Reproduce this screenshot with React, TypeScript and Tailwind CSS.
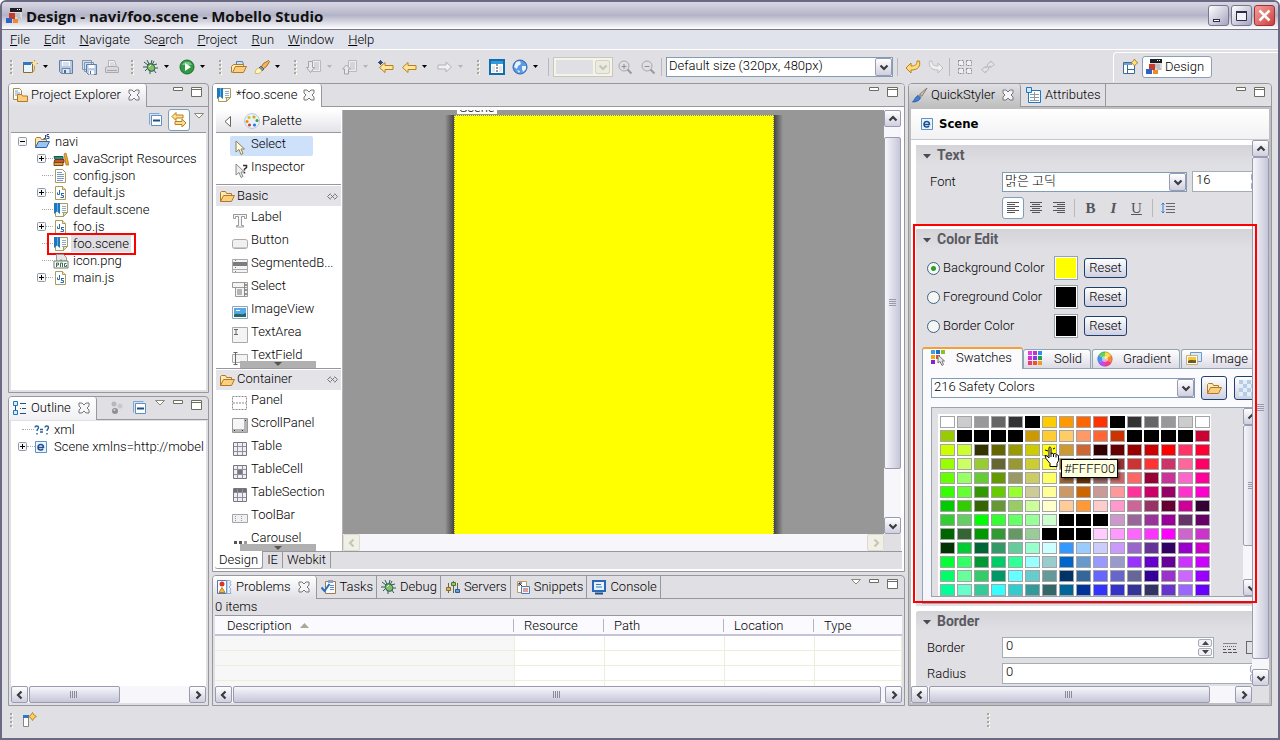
import React from "react";

type Kids = { children?: React.ReactNode };

/* ---------- icons ---------- */

function Svg({ children, w = 16, h = 16 }: Kids & { w?: number; h?: number }) {
  return (
    <svg width={w} height={h} viewBox={`0 0 ${w} ${h}`} fill="none" className="shrink-0" aria-hidden="true">
      {children}
    </svg>
  );
}

const AppIcon = () => (
  <Svg>
    <path d="M4 0h12v11H4z" fill="#d9d9de" />
    <path d="M4 0h12v4H4z" fill="#1d1d22" />
    <path d="M11 1h1v1h-1zM13 1h1v1h-1z" fill="#fff" />
    <path d="M9 6h5M9 8h5M11 10h4" stroke="#a5a5ad" />
    <path d="M3 5h6v6H3z" fill="#c6392c" />
    <path d="M0 10h6v5H0z" fill="#2e63c4" />
    <path d="M7 11h5v4H7z" fill="#f08a24" />
  </Svg>
);
const NewIcon = () => (
  <Svg>
    <path d="M1.500 3.500h9v10h-9z" fill="#e8f7fd" stroke="#8a6a2a" />
    <path d="M1 3h8v3H1z" fill="#2e78c4" />
    <path d="M12.500 1v8M9 4.500h7M12.500 9c0 3-1 4-3 4.500" stroke="#c8962c" />
    <path d="M12.500 2l1 1.500 1.500 1-1.500 1-1 1.500-1-1.500-1.500-1 1.500-1z" fill="#ffe88a" />
  </Svg>
);
const SaveIcon = () => (
  <Svg>
    <path d="M1.500 1.500h13v13h-11l-2-2z" fill="#b9cbe4" stroke="#5f7fa8" />
    <path d="M4 2h8v5H4z" fill="#fff" />
    <path d="M5 4h6M5 6h6" stroke="#b5c0d0" />
    <path d="M4 9.500h8v5H4z" fill="#dfe7f2" stroke="#6c87ab" />
    <path d="M6 11h2v3H6z" fill="#4c6c98" />
  </Svg>
);
const SaveAllIcon = () => (
  <Svg>
    <path d="M1.500 1.500h9v9h-9zM3.500 3.500h9v9h-9z" fill="#d3deed" stroke="#7c96b8" />
    <path d="M5.500 5.500h10v10h-8l-2-2z" fill="#b9cbe4" stroke="#5f7fa8" />
    <path d="M7.500 6h6v3h-6zM8 11.500h5v4H8z" fill="#fff" />
    <path d="M9 12h1v3H9z" fill="#4c6c98" />
  </Svg>
);
const PrintIcon = () => (
  <Svg>
    <path d="M4.500 1.500h6l2 6h-8z" fill="#f3f3f3" stroke="#b5b5b8" />
    <path d="M6 4h4M6 6h5" stroke="#c4c4c6" />
    <path d="M1.500 8.500l2-1h9l2 1v5h-13z" fill="#d9d9dc" stroke="#aaaab0" />
    <path d="M3 11.500h10" stroke="#a5a5aa" />
  </Svg>
);
const BugIcon = () => (
  <Svg>
    <path d="M1 3l4 3M4 1l2 4M9 1l-1 4M14 5l-4 1M15 9h-4M13 14l-3-4M7 15l0-4M2 12l3-3M0 8h5M11 2l-2 4" stroke="#2c5a50" />
    <ellipse cx="8" cy="8.500" rx="4" ry="3.400" transform="rotate(40 8 8.500)" fill="#86bd68" stroke="#2a6152" />
    <path d="M6 8l2-2" stroke="#e2f2c4" />
  </Svg>
);
const RunIcon = () => (
  <Svg>
    <circle cx="8" cy="8" r="7" fill="#2f9a44" stroke="#1d6e2e" />
    <path d="M3 6a5.500 5.500 0 0 1 10 0z" fill="#7cc487" />
    <path d="M6 4l6 4-6 4z" fill="#fff" />
  </Svg>
);
const OpenFolder = () => (
  <Svg>
    <path d="M1.500 13.500v-9l1-1h4l1 2h5v2" fill="#fde9b4" stroke="#b07a2a" />
    <path d="M1.500 13.500l3-6h11l-3 6z" fill="#fbcf7e" stroke="#b07a2a" />
  </Svg>
);
const TaskFolder = () => (
  <Svg>
    <path d="M5.500 5.500v-3h6l1 3" fill="#cfe0f4" stroke="#5f7fa8" />
    <path d="M0.500 13.500v-6l2-2h10v2" fill="#fde9b4" stroke="#b07a2a" />
    <path d="M1.500 13.500l3-6h11l-3 6z" fill="#fbcf7e" stroke="#b07a2a" />
  </Svg>
);
const TorchIcon = () => (
  <Svg>
    <path d="M14.500 1.500l-5 3-2 3 2 2 3-2 3-5z" fill="#f5b65a" stroke="#a96a20" />
    <path d="M7 7l3 3-2 2-3-3z" fill="#8a8fa8" stroke="#5a5f78" />
    <path d="M5 9l3 3-3 2.500H1l1-4z" fill="#fff6c0" stroke="#d8bf62" />
  </Svg>
);
const StepIcon = ({ up }: { up?: boolean }) => (
  <Svg>
    <path d="M6.500 1.500h8v11h-8z" fill="#eeeef0" stroke="#b9b9bc" />
    <path d="M8 4h5M8 6h5M8 8h5M8 10h5" stroke="#bdbdc0" />
    {up ? (
      <path d="M4.500 6l4 4h-2v5h-4v-5h-2z" fill="#e9e9ec" stroke="#a4a4a8" />
    ) : (
      <path d="M2.500 2.500h4v6h2l-4 5-4-5h2z" fill="#e9e9ec" stroke="#a4a4a8" />
    )}
  </Svg>
);
const ArrowLeft = ({ star }: { star?: boolean }) => (
  <Svg>
    <path d="M1.500 8.500l5.500-5v3h8v4h-8v3z" fill="#ffe69a" stroke="#b97f1c" strokeLinejoin="round" />
    {star && <path d="M2.500 1v5M0 3.500h5M1 2l3 3M4 2L1 5" stroke="#2d4f86" />}
  </Svg>
);
const ArrowRight = () => (
  <Svg>
    <path d="M14.500 8l-5.500-5v3h-8v4h8v3z" fill="#f0f0f0" stroke="#b4b4b8" strokeLinejoin="round" />
  </Svg>
);
const LayoutIcon = () => (
  <Svg>
    <path d="M1 1h14v14H1z" fill="#fff" stroke="#0f6fae" strokeWidth="2" />
    <path d="M2 2h12v3H2z" fill="#2f9bdc" />
    <path d="M8 5v9" stroke="#333" strokeDasharray="2 1" />
    <path d="M3 7h3v6H3zM10 7h3v6h-3z" fill="#e4e8ec" />
  </Svg>
);
const GlobeIcon = () => (
  <Svg>
    <circle cx="8" cy="8" r="7" fill="#5a9be4" stroke="#2c62b4" />
    <path d="M4 3l4-1 1 3-3 2-1 3-3-2zM10 7l4 0 0 3-3 3-1-3zM5 11l3 1-1 2z" fill="#eaf3fd" />
  </Svg>
);
const ZoomIcon = ({ plus }: { plus?: boolean }) => (
  <Svg>
    <circle cx="7" cy="7" r="5" stroke="#a8a8ac" />
    <path d={plus ? "M4.500 7.500h5M7 5v5" : "M4.500 7.500h5"} stroke="#8e8e94" />
    <path d="M10.500 10.500l4 4" stroke="#9a9aa0" strokeWidth="2" />
  </Svg>
);
const UndoIcon = ({ redo }: { redo?: boolean }) => (
  <Svg>
    <g transform={redo ? "translate(16 0) scale(-1 1)" : undefined}>
      <path
        d="M1 9l5-5v3c4 0 6-1 6-5h2.500c1 5-1 9-8.500 9v3z"
        fill={redo ? "#efefef" : "#ffdc78"}
        stroke={redo ? "#bcbcc0" : "#b97f1c"}
        strokeLinejoin="round"
      />
    </g>
  </Svg>
);
const GridDotsIcon = () => (
  <Svg>
    <path d="M1.500 1.500h5v5h-5zM9.500 1.500h5v5h-5zM1.500 9.500h5v5h-5zM9.500 9.500h5v5h-5z" stroke="#8f8f94" strokeDasharray="2 1" fill="#f0f0f2" />
  </Svg>
);
const SyncIcon = () => (
  <Svg>
    <path d="M7.500 8c-.5-3 1-4.500 3-4.500V2l4 3.500-4 3V7c-1.500 0-1.500 1-1.500 2zM8.500 8c.5 3-1 4.500-3 4.500V14l-4-3.500 4-3V9C7 9 7 8 7 7z" fill="#e4e4e4" stroke="#b9b9bc" />
  </Svg>
);
const PerspectiveIcon = () => (
  <Svg>
    <path d="M1.500 3.500h11v11h-11z" fill="#fff" stroke="#3b6a94" />
    <path d="M2 4h8v2H2z" fill="#6ba2d8" />
    <path d="M5.500 6v8M5.500 10.500h7" stroke="#3b6a94" />
    <path d="M12.500 0l1.500 2.500 2 1-2 1.500-1.500 2-1.500-2-2-1.500 2-1z" fill="#ffe27a" stroke="#a8792a" strokeWidth=".8" />
  </Svg>
);
const ExplorerIcon = () => (
  <Svg>
    <path d="M1.500 1.500h6l2 2v9h-8z" fill="#fff" stroke="#a08b50" />
    <path d="M3 4h3M3 6h5M3 8h4" stroke="#7aa0d0" />
    <path d="M5.500 14.500v-7h4l1 1.500h5v5.500z" fill="#fbcf7e" stroke="#b07a2a" />
  </Svg>
);
const SceneFile = () => (
  <Svg>
    <path d="M2.500 1.500h12v9l-4 4h-8z" fill="#fbfaf3" stroke="#a99a62" />
    <path d="M9 4.500h4M9 6.500h4M9 8.500h4M9 10.500h2" stroke="#86aedb" />
    <path d="M10.500 14.500v-4h4z" fill="#e9dfb4" stroke="#a99a62" />
    <path d="M1 1h6v11l-3-2.500L1 12z" fill="#1f78ba" />
    <path d="M4 1h1v9H4z" fill="#5fb0e4" />
  </Svg>
);
const JsFile = () => (
  <Svg>
    <path d="M2.500 1.500h7l3 3v10h-10z" fill="#fff" stroke="#a99a62" />
    <path d="M9.500 1.500v3h3" stroke="#a99a62" fill="#f2e6b5" />
    <path d="M6.500 5v4.500h-2v-2M8 8.500h3M8.500 8.500v2h2v2h-3" stroke="#2868ae" />
  </Svg>
);
const TextFile = () => (
  <Svg>
    <path d="M2.500 1.500h7l3 3v10h-10z" fill="#fff" stroke="#a99a62" />
    <path d="M4 4.500h5M4 6.500h7M4 8.500h7M4 10.500h7M4 12.500h6" stroke="#8099c4" />
  </Svg>
);
const PngFile = () => (
  <Svg>
    <path d="M3.500 1.500h7l3 3v10h-10z" fill="#e6e6e6" stroke="#9a9a9a" />
    <path d="M5 9l3-3 2 2 2-1v1z" fill="#7dae82" />
    <path d="M1 8h14v7H1z" fill="#fff" stroke="#777" />
    <path d="M3.500 14v-4h2v2h-2M7.500 14v-4h2v4M13.500 10.500h-2v3h2v-1.500" stroke="#35734d" />
  </Svg>
);
const LibIcon = () => (
  <Svg>
    <path d="M1 5.500h9v3H2z" fill="#2e8b83" stroke="#135a55" />
    <path d="M2 8.500h9v3H1z" fill="#c25a2c" stroke="#7c2f10" />
    <path d="M1 11.500h9v3H1z" fill="#e09a44" stroke="#7c4a10" />
    <path d="M11 3l2-1 3 12h-3z" fill="#f2a725" stroke="#a8681a" strokeWidth=".7" />
  </Svg>
);
const ProjectIcon = () => (
  <Svg>
    <path d="M1.500 13.500v-9l1-1h4l1 2h5v2" fill="#fde9b4" stroke="#b07a2a" />
    <path d="M1.500 13.500l3-6h11l-3 6z" fill="#9dc3ee" stroke="#2d62ac" />
    <path d="M11.500 1v3.500h-2M15 .5h-2v2h2v2h-2.500" stroke="#1d4f95" />
  </Svg>
);
const OutlineIcon = () => (
  <Svg>
    <path d="M1.500 1.500h4v4h-4zM1.500 10.500h4v4h-4z" fill="#d7ebf8" stroke="#1f78ba" />
    <path d="M3.500 6v4M8 3.500h6M10 8.500h4M8 13.500h6M8 8.500h1" stroke="#24507e" />
  </Svg>
);
const DotsIcon = () => (
  <Svg>
    <circle cx="5" cy="4" r="2.500" fill="#b8b8bb" />
    <circle cx="11" cy="6" r="2.500" fill="#c9c9cc" />
    <circle cx="6" cy="11" r="3" fill="#8f8f92" />
    <circle cx="5.500" cy="10" r="1" fill="#d4d4d6" />
  </Svg>
);
const CollapseIcon = () => (
  <Svg>
    <path d="M1.500 12.500v-11h10" stroke="#7aa7d6" />
    <path d="M3.500 3.500h10v10h-10z" fill="#fff" stroke="#5d8fc6" />
    <path d="M5 8.500h7" stroke="#1d4f95" strokeWidth="2" />
  </Svg>
);
const LinkIcon = () => (
  <Svg>
    <path d="M1 4.500l4-4v2.500h7v3H5v2.500zM15 11l-4-4v2.500H4v3h7v2.500z" fill="#ffe08a" stroke="#b97f1c" strokeLinejoin="round" />
  </Svg>
);
const PaletteIcon = () => (
  <Svg>
    <circle cx="8" cy="8" r="7.500" fill="#e6f1fb" stroke="#b4cde6" />
    <circle cx="5" cy="4.500" r="1.500" fill="#f5b800" />
    <circle cx="10" cy="4" r="1.500" fill="#d9a400" />
    <circle cx="13" cy="7.500" r="1.500" fill="#3f9f2a" />
    <circle cx="3" cy="8.500" r="1.500" fill="#f58a00" />
    <circle cx="5.500" cy="12" r="1.500" fill="#d93a22" />
    <circle cx="10.500" cy="12" r="1.500" fill="#2a6fd6" />
  </Svg>
);
const CursorIcon = ({ help }: { help?: boolean }) => (
  <Svg>
    <path d="M4 1v11l3-2.500 2 5 2-1-2-4.500h3.500z" fill={help ? "#eee" : "#fff9e0"} stroke={help ? "#888" : "#8f7f55"} />
    {help && <path d="M11 2.500h3.500v2l-2 1.500v1.500M12.500 9v1.500" stroke="#333" strokeWidth="1.500" />}
  </Svg>
);
const QuickIcon = () => (
  <Svg>
    <path d="M15 1L8 7l2 2z" fill="#d8c7b0" stroke="#7a6a55" strokeWidth=".8" />
    <path d="M8 6.500l2.500 2.500-2 2L6 8.500z" fill="#9a9a9a" />
    <path d="M6 8.500l2.500 2.500c-1 2.500-4 4-8 4 2-1.500 2.500-5 5.500-6.500z" fill="#3f7fd4" stroke="#2456a0" strokeWidth=".8" />
  </Svg>
);
const AttrIcon = () => (
  <Svg>
    <path d="M2.500 3.500h12v12h-12z" fill="#fff" stroke="#1f78ba" />
    <path d="M4 7.500h9M4 10.500h9M4 13.500h9M8.500 5v9" stroke="#8b98a8" />
    <path d="M.5.500h5v5h-5z" fill="#cfe8f8" stroke="#1f78ba" />
  </Svg>
);
const ElementIcon = () => (
  <Svg w={12} h={12}>
    <path d="M.5.500h11v11H.5z" fill="#eef4fb" stroke="#5d94c8" />
    <path d="M3 6.500h5.500c0-4-5.500-4-5.500 0 0 3 4 3 5 1.500" stroke="#1d4f95" strokeWidth="1.500" />
  </Svg>
);
const XmlIcon = () => (
  <Svg w={16} h={12}>
    <path d="M1 3.500c0-2 3.500-2 3.500 0C4.500 5 3 5 3 7M3 9v1.500M6 5.500h3M6 8h3M11 3.500c0-2 3.500-2 3.500 0 0 1.500-1.500 1.500-1.500 3.500M13 9v1.500" stroke="#24609c" strokeWidth="1.400" />
  </Svg>
);
const ProblemsIcon = () => (
  <Svg>
    <path d="M1.500 1.500h9v13h-9z" fill="#fff" stroke="#4f7ab0" />
    <path d="M11 1.500h3l1 1-1 1.500 1 2-2 2 2 2-1 2 1 2.500h-4z" fill="#e8f1fb" stroke="#8fb2dc" />
    <circle cx="6" cy="5" r="2.500" fill="#d9342a" />
    <path d="M6 8.500l3 5H3z" fill="#f6b94a" stroke="#b97f1c" />
  </Svg>
);
const TasksIcon = () => (
  <Svg>
    <path d="M4.500 2.500h10v12h-10z" fill="#f7fbff" stroke="#a07a48" />
    <path d="M7 1h5v3H7z" fill="#8aa0c0" />
    <path d="M9 6.500h4M9 8.500h4M9 10.500h4" stroke="#5a88c0" />
    <path d="M.500 8.500l3 3.500 5-7" stroke="#2a6fb8" strokeWidth="2" />
  </Svg>
);
const ServersIcon = () => (
  <Svg>
    <path d="M3.500 4v10M8.500 2v12M12.500 4v10" stroke="#5a6a4a" />
    <path d="M1.500 8.500h4v3h-4z" fill="#e2b84a" stroke="#8a6a2a" />
    <path d="M6.500 3.500h4v3h-4z" fill="#9bc46a" stroke="#4a7a2a" />
    <path d="M10.500 10.500h4v3h-4z" fill="#6aa0dc" stroke="#2a5a9a" />
  </Svg>
);
const SnippetsIcon = () => (
  <Svg>
    <path d="M2.500 2.500h9v11h-9z" fill="#fff" stroke="#c09a5a" />
    <path d="M4 4l4 4M4 4h3M4 4v3" stroke="#222" />
    <path d="M6.500 7.500h8v7h-8z" fill="#eef6ff" stroke="#4a80b8" />
    <path d="M8 10h5M8 12h5" stroke="#c64a3a" />
  </Svg>
);
const ConsoleIcon = () => (
  <Svg>
    <path d="M2 2h12v10H2z" fill="#e8f2fc" stroke="#2a6ab4" strokeWidth="2" />
    <path d="M5 5.500h5M5 8h6" stroke="#3a78c0" />
    <path d="M4 14.500h8" stroke="#1f4f8a" strokeWidth="2" />
  </Svg>
);
const CloseX = () => (
  <Svg w={12} h={12}>
    <path d="M1 1h3l2 2 2-2h3v3L9 6l2 2v3H8L6 9l-2 2H1V8l2-2-2-2z" fill="#f6f6f8" stroke="#77777c" />
  </Svg>
);
const MinIcon = () => (
  <Svg w={10} h={12}>
    <path d="M.5 1.500h9v3h-9z" fill="#fff" stroke="#6f6d60" />
  </Svg>
);
const MaxIcon = () => (
  <Svg w={11} h={12}>
    <path d="M.5 1.500h10v9H.5z" fill="#fff" stroke="#6f6d60" />
    <path d="M1 3.500h9" stroke="#6f6d60" />
  </Svg>
);
const MenuTri = () => (
  <Svg w={10} h={12}>
    <path d="M.5 1.500h9L5 6z" fill="#fff" stroke="#8a887c" />
  </Svg>
);
const LabelIcon = () => (
  <Svg>
    <path d="M1.500 2.500h13v4h-2v-2h-3v9h2v1.500h-7v-1.500h2v-9h-3v2h-2z" fill="#f6f6f6" stroke="#9b9b9b" />
  </Svg>
);
const ButtonIcon = () => (
  <Svg>
    <rect x=".5" y="4.500" width="15" height="9" rx="2" fill="#f0f0f0" stroke="#aaa" />
    <path d="M2 12.500h12" stroke="#c8c8c8" />
  </Svg>
);
const SegIcon = () => (
  <Svg>
    <path d="M.5 1.500h15v13H.5z" fill="#f4f4f4" stroke="#aaa" />
    <path d="M1 4h14v4H1z" fill="#7b7b80" />
    <path d="M1 11.500h14" stroke="#aaa" />
    <path d="M3 2.500h1M3 9.500h1M3 13.500h1" stroke="#777" />
  </Svg>
);
const SelectBoxIcon = () => (
  <Svg>
    <path d="M.5 1.500h15v5H.5zM3.500 6.500h12v9h-12z" fill="#f4f4f4" stroke="#999" />
    <path d="M5 9h5M5 11h5M5 13h5" stroke="#777" />
    <path d="M12.500 2v13" stroke="#888" />
    <path d="M13 4h2M13 9h2M13 13h2" stroke="#333" />
  </Svg>
);
const ImageIcon = () => (
  <Svg>
    <path d="M.5 2.500h15v12H.5z" fill="#fff" stroke="#8fa6bd" />
    <path d="M2 4h12v9H2z" fill="#58a8e8" />
    <path d="M2 13v-2c3-3 6 1 12-2v4z" fill="#1f6a62" />
    <path d="M4 6h4v1H4z" fill="#fff" />
  </Svg>
);
const TextAreaIcon = () => (
  <Svg>
    <path d="M.5.500h15v15H.500z" fill="#f4f4f4" stroke="#aaa" />
    <path d="M2 2.500h4M2 7.500h4M4 3v5" stroke="#666" />
  </Svg>
);
const TextFieldIcon = () => (
  <Svg>
    <path d="M.5 4.500h15v8H.500z" fill="#f4f4f4" stroke="#aaa" />
    <path d="M1.500 2.500h4M1.500 14.500h4M3.500 3v11" stroke="#666" />
  </Svg>
);
const PanelIcon = () => (
  <Svg>
    <path d="M.5 1.500h14v13H.500zM1 8h13" stroke="#8a8a90" strokeDasharray="2 1" fill="#fff" />
  </Svg>
);
const ScrollPanelIcon = () => (
  <Svg>
    <path d="M.5.500h15v14H.500z" fill="#f6f6f6" stroke="#999" />
    <path d="M12 1h3v13H1v-3h11z" fill="#b5b5b8" />
    <path d="M13 2h1v1h-1zM2 12h1v1H2zM10 12h1v1h-1z" fill="#333" />
  </Svg>
);
const TableIcon = ({ mode }: { mode?: string }) => (
  <Svg>
    <path d="M1.500 1.500h13v13h-13z" fill="#eeeef8" stroke="#77777d" />
    {mode === "section" && <path d="M2 2h12v3H2z" fill="#6f6f74" />}
    {mode === "cell" && <path d="M6 6h4v4H6z" fill="#77777d" />}
    <path d="M2 5.500h12M2 10.500h12M5.500 2v12M10.500 2v12" stroke="#8f8f98" />
  </Svg>
);
const ToolBarIcon = () => (
  <Svg>
    <path d="M.5 4.500h15v8H.500z" fill="#f0f0f2" stroke="#a4a4a8" />
    <path d="M3.500 6v5M9.500 6v5" stroke="#999" strokeDasharray="1 1" />
  </Svg>
);
const CarouselIcon = () => (
  <Svg>
    <path d="M2 8h3v3H2zM7 8h3v3H7z" fill="#55554f" />
    <path d="M12 8h3v3h-3z" fill="#999" />
  </Svg>
);
const PinIcon = () => (
  <Svg w={11} h={7}>
    <path d="M3.500.500l-3 3 3 3M7.500.500l3 3-3 3M3.500 1.500l4 4M7.500 1.500l-4 4" stroke="#77777c" />
  </Svg>
);
const cells = [
  [0, 0, "#3aa0f0"], [5, 0, "#1b6fd0"], [10, 0, "#8fc01c"],
  [0, 5, "#f5a800"], [5, 5, "#ff3fd0"], [10, 5, "#7b30e0"],
  [0, 10, "#8a20d0"], [5, 10, "#d02a2a"], [10, 10, "#f06a10"],
] as [number, number, string][];
const solidCells = ["#e040f0", "#c030e0", "#2a90f0", "#d030d0", "#8a3ae0", "#20a050", "#f03a6a", "#f0502a", "#f09a20"];
const SwatchIcon = ({ pointer }: { pointer?: boolean }) => (
  <Svg>
    {cells.map(([x, y, c], i) =>
      pointer && x > 4 && y > 4 ? null : <rect key={`${x}-${y}`} x={x} y={y} width="4" height="4" fill={pointer ? c : solidCells[i]} />
    )}
    {pointer && <path d="M5 5h4v4H5z" fill="#f0402a" />}
    {pointer && <path d="M7 5v8l2-1.500 2 4 1.500-1-1.500-3.500h2.500z" fill="#e8e8e8" stroke="#777" />}
  </Svg>
);
const WheelIcon = () => (
  <Svg>
    <path d="M8 8V.5A7.500 7.500 0 0 1 14.500 4.300z" fill="#ffe03a" />
    <path d="M8 8l6.500-3.700a7.500 7.500 0 0 1 0 7.400z" fill="#ff8a2a" />
    <path d="M8 8l6.500 3.700A7.500 7.500 0 0 1 8 15.500z" fill="#ff3a7a" />
    <path d="M8 8v7.500a7.500 7.500 0 0 1-6.500-3.800z" fill="#c04af0" />
    <path d="M8 8l-6.500 3.700a7.500 7.500 0 0 1 0-7.400z" fill="#3a9af5" />
    <path d="M8 8L1.500 4.300A7.500 7.500 0 0 1 8 .5z" fill="#5ad85a" />
    <circle cx="8" cy="8" r="3" fill="#fff" fillOpacity=".5" />
    <circle cx="8" cy="8" r="7" stroke="#7a6ab0" strokeOpacity=".5" />
  </Svg>
);
const PicturesIcon = () => (
  <Svg>
    <path d="M4.500 1.500h11v9h-11z" fill="#dceaf8" stroke="#6a9ad0" />
    <path d="M.5 4.500h11v9H.500z" fill="#fff" stroke="#c8b070" />
    <path d="M2 6h8v6H2z" fill="#f5c53a" />
    <path d="M2 10c3-2 5 0 8-1v3H2z" fill="#6a5a20" />
  </Svg>
);
const StatusIcon = () => (
  <Svg>
    <path d="M1.500 3.500h5v11h-5z" fill="#fff" stroke="#8a887c" />
    <path d="M1 3h6v3H1z" fill="#2e78c4" />
    <path d="M10.500.5l1.500 2.500 2.500 1.500L12 6l-1.500 2.500L9 6 6.500 4.500 9 3z" fill="#ffd24a" stroke="#a8792a" strokeWidth=".8" />
  </Svg>
);
const AlignIcon = ({ mode }: { mode: "left" | "center" | "right" }) => (
  <Svg w={12} h={12}>
    <path d="M0 .5h12M0 4.500h12M0 8.500h12" stroke="#55555b" />
    <path
      d={mode === "left" ? "M0 2.500h8M0 6.500h8M0 10.500h8" : mode === "center" ? "M2 2.500h8M2 6.500h8M2 10.500h8" : "M4 2.500h8M4 6.500h8M4 10.500h8"}
      stroke="#55555b"
    />
  </Svg>
);
const LineHeightIcon = () => (
  <Svg w={14} h={12}>
    <path d="M2 1v10M.5 2.500L2 1l1.500 1.500M.5 9.500L2 11l1.500-1.500" stroke="#2a7fd0" />
    <path d="M5 1.500h9M5 4.500h9M5 7.500h9M5 10.500h9" stroke="#66666c" />
  </Svg>
);
const DashIcon = () => (
  <Svg w={14} h={12}>
    <path d="M0 1.500h14" stroke="#888" />
    <path d="M0 4.500h14" stroke="#666" strokeDasharray="1 1" />
    <path d="M0 7.500h14" stroke="#555" strokeDasharray="3 2" />
    <path d="M0 10.500h14" stroke="#555" strokeDasharray="4 1" />
  </Svg>
);
const Chevron = ({ dir, dim }: { dir: "up" | "down" | "left" | "right"; dim?: boolean }) => {
  const d = { up: "M1.500 6.500L5 3l3.500 3.500", down: "M1.500 3.500L5 7l3.500-3.500", left: "M6.500 1.500L3 5l3.500 3.500", right: "M3.500 1.500L7 5 3.500 8.500" }[dir];
  return (
    <Svg w={10} h={10}>
      <path d={d} stroke={dim ? "#c6c6b8" : "#3a3a40"} strokeWidth="2.200" />
    </Svg>
  );
};

/* ---------- small building blocks ---------- */

function ScrollBtn({ dir, dim }: { dir: "up" | "down" | "left" | "right"; dim?: boolean }) {
  return (
    <button
      aria-label={`Scroll ${dir}`}
      className={
        "flex size-[17px] shrink-0 items-center justify-center rounded-[2px] border " +
        (dim ? "border-[#dcdccd] bg-[#f0f0e6]" : "border-[#9a9ab0] bg-linear-to-b from-white to-[#cfcfdf]")
      }
    >
      <Chevron dir={dir} dim={dim} />
    </button>
  );
}

function Grip({ vertical }: { vertical?: boolean }) {
  return vertical ? (
    <svg width="7" height="8" aria-hidden="true"><path d="M0 .5h7M0 2.500h7M0 4.500h7M0 6.500h7" stroke="#9a9aac" /></svg>
  ) : (
    <svg width="8" height="7" aria-hidden="true"><path d="M.5 0v7M2.500 0v7M4.500 0v7M6.500 0v7" stroke="#8a8a9c" /></svg>
  );
}

function HScroll({ thumb, dim }: { thumb?: string; dim?: boolean }) {
  return (
    <div className="flex h-[17px] shrink-0 justify-between gap-px bg-[#f6f6fb]">
      <ScrollBtn dir="left" dim={dim} />
      <div className="flex min-w-0 flex-1">
        {thumb && (
          <div className={"flex items-center justify-center rounded-[2px] border border-[#9a9ab0] bg-linear-to-b from-[#f6f6fa] to-[#c6c6da] " + thumb}>
            <Grip />
          </div>
        )}
      </div>
      <ScrollBtn dir="right" dim={dim} />
    </div>
  );
}

function VScroll({ before, thumb, after }: { before?: string; thumb: string; after?: string }) {
  return (
    <div className="flex w-[17px] shrink-0 flex-col bg-[#f6f6fb]">
      <ScrollBtn dir="up" />
      <div className="flex min-h-0 flex-1 flex-col">
        {before && <div className={before} />}
        <div className={"flex items-center justify-center rounded-[2px] border border-[#9a9ab0] bg-linear-to-r from-[#f6f6fa] to-[#c6c6da] " + thumb}>
          <Grip vertical />
        </div>
        {after && <div className={after} />}
      </div>
      <ScrollBtn dir="down" />
    </div>
  );
}

function Combo({ label, value, options, className }: { label: string; value: string; options: string[]; className: string }) {
  return (
    <div className={"relative flex h-[20px] shrink-0 border border-[#7f9db9] bg-white " + className}>
      <select aria-label={label} defaultValue={value} className="w-full appearance-none bg-transparent pr-[18px] pb-[2px] pl-[2px] leading-[16px] outline-none">
        {options.map((o) => (
          <option key={o}>{o}</option>
        ))}
      </select>
      <span className="pointer-events-none absolute top-0 right-0 flex h-[18px] w-[17px] items-center justify-center rounded-[2px] border border-[#9a9ab0] bg-linear-to-b from-white to-[#cfcfdf]">
        <Chevron dir="down" />
      </span>
    </div>
  );
}

function Handle() {
  return (
    <span className="w-[12px] shrink-0">
      <svg width="3" height="16" className="block" aria-hidden="true">
        <path d="M0 1h2v2H0zM0 5h2v2H0zM0 9h2v2H0zM0 13h2v2H0z" fill="#aaa896" />
        <path d="M2 2h1v2H2zM2 6h1v2H2zM2 10h1v2H2zM2 14h1v2H2z" fill="#fff" />
      </svg>
    </span>
  );
}
function Tool({ name, wide, children }: Kids & { name: string; wide?: boolean }) {
  return (
    <button aria-label={name} className={wide ? "w-[23px] shrink-0" : "w-[21px] shrink-0"}>
      {children}
    </button>
  );
}
function Drop({ dim }: { dim?: boolean }) {
  return (
    <button aria-label="More" className="w-[15px] shrink-0">
      <svg width="5" height="3" aria-hidden="true"><path d="M0 0h5L2.500 3z" fill={dim ? "#b4b4b0" : "#000"} /></svg>
    </button>
  );
}
const Sep = () => <span className="h-[18px] w-px shrink-0 bg-[#b9b8bf]" />;

function PaneControls({ menu }: { menu?: boolean }) {
  return (
    <div className="ml-auto flex items-start gap-[8px] pt-[2px] pr-[6px]">
      {menu && <button aria-label="View menu"><MenuTri /></button>}
      <button aria-label="Minimize"><MinIcon /></button>
      <button aria-label="Maximize"><MaxIcon /></button>
    </div>
  );
}

const paneCls = "flex min-h-0 flex-col overflow-hidden rounded-t-[4px] border border-[#98979d] bg-[#e0dfe4]";
const activeTab = "-mb-px flex h-[23px] shrink-0 items-center rounded-tr-[3px] border-r border-[#98979d] pb-[2px] pl-[3px] pr-[6px] ";
const strip = "flex h-[23px] shrink-0 border-b border-[#98979d] ";

/* ---------- tree ---------- */

function Expander({ open }: { open?: boolean }) {
  return (
    <button aria-label={open ? "Collapse" : "Expand"} className="block size-[9px]">
      <svg width="9" height="9" className="block" aria-hidden="true">
        <rect x=".5" y=".5" width="8" height="8" rx="1" fill="#f6f6f4" stroke="#8d98a8" />
        <path d={open ? "M2 4.500h5" : "M2 4.500h5M4.500 2v5"} stroke="#000" />
      </svg>
    </button>
  );
}

const files: { name: string; icon: React.ReactNode; more?: boolean; selected?: boolean }[] = [
  { name: "JavaScript Resources", icon: <LibIcon />, more: true },
  { name: "config.json", icon: <TextFile /> },
  { name: "default.js", icon: <JsFile />, more: true },
  { name: "default.scene", icon: <SceneFile /> },
  { name: "foo.js", icon: <JsFile />, more: true },
  { name: "foo.scene", icon: <SceneFile />, selected: true },
  { name: "icon.png", icon: <PngFile /> },
  { name: "main.js", icon: <JsFile />, more: true },
];

function Explorer() {
  return (
    <section className={paneCls + " flex-1"}>
      <div className={strip}>
        <div className={activeTab + "gap-[3px] bg-linear-to-b from-white to-[#e0dfe4]"}>
          <ExplorerIcon />
          <span className="mr-[4px]">Project Explorer</span>
          <button aria-label="Close"><CloseX /></button>
        </div>
        <PaneControls />
      </div>
      <div className="flex h-[25px] shrink-0 items-center justify-end gap-[4px] pr-[4px]">
        <button aria-label="Collapse all"><CollapseIcon /></button>
        <button aria-label="Link with editor" className="flex size-[22px] items-center justify-center rounded-[3px] border border-[#7f9db9] bg-white">
          <LinkIcon />
        </button>
        <button aria-label="View menu" className="pb-[4px]"><MenuTri /></button>
      </div>
      <div className="mx-[2px] mb-[2px] flex-1 border-t border-[#98979d] bg-white">
        <ul className="relative">
          <li className="flex h-[17px] items-center pl-[7px]">
            <Expander open />
            <span className="mr-[5px] ml-[7px]"><ProjectIcon /></span>
            navi
          </li>
          {files.map((f) => (
            <li key={f.name} className="relative flex h-[17px] items-center pl-[26px]">
              <span className="flex w-[16px] shrink-0 items-center">
                {f.more && <Expander />}
                <span className={"flex-1 border-t border-dotted border-[#a8a8a0] " + (f.more ? "" : "ml-[5px]")} />
              </span>
              {f.icon}
              <span className={"ml-[2px] px-[2px] leading-[17px] " + (f.selected ? "bg-[#e0dfe4]" : "")}>{f.name}</span>
              {f.selected && <span className="absolute -top-[2px] left-[36px] h-[22px] w-[89px] border-2 border-[#f00]" />}
            </li>
          ))}
        </ul>
      </div>
    </section>
  );
}

function Outline() {
  return (
    <section className={paneCls + " flex-1"}>
      <div className={strip}>
        <div className={activeTab + "gap-[3px] bg-linear-to-b from-white to-[#f0eff3]"}>
          <OutlineIcon />
          <span className="mr-[4px]">Outline</span>
          <button aria-label="Close"><CloseX /></button>
        </div>
        <div className="ml-[12px] flex items-center gap-[7px]">
          <button aria-label="Filter"><DotsIcon /></button>
          <button aria-label="Collapse all"><CollapseIcon /></button>
        </div>
        <PaneControls menu />
      </div>
      <div className="m-[2px] mt-px flex min-h-0 flex-1 flex-col bg-white">
        <ul className="flex-1 overflow-hidden whitespace-nowrap">
          <li className="flex h-[17px] items-center pl-[11px]">
            <span className="w-[12px] shrink-0 border-t border-dotted border-[#a8a8a0]" />
            <XmlIcon />
            <span className="ml-[4px]">xml</span>
          </li>
          <li className="flex h-[17px] items-center pl-[7px]">
            <Expander />
            <span className="w-[8px] shrink-0 border-t border-dotted border-[#a8a8a0]" />
            <ElementIcon />
            <span className="ml-[7px]">Scene xmlns=http://mobel</span>
          </li>
        </ul>
        <HScroll thumb="w-[57%]" />
      </div>
    </section>
  );
}

/* ---------- editor ---------- */

const basicItems: [string, React.ReactNode][] = [
  ["Label", <LabelIcon />],
  ["Button", <ButtonIcon />],
  ["SegmentedB...", <SegIcon />],
  ["Select", <SelectBoxIcon />],
  ["ImageView", <ImageIcon />],
  ["TextArea", <TextAreaIcon />],
  ["TextField", <TextFieldIcon />],
];
const containerItems: [string, React.ReactNode][] = [
  ["Panel", <PanelIcon />],
  ["ScrollPanel", <ScrollPanelIcon />],
  ["Table", <TableIcon />],
  ["TableCell", <TableIcon mode="cell" />],
  ["TableSection", <TableIcon mode="section" />],
  ["ToolBar", <ToolBarIcon />],
  ["Carousel", <CarouselIcon />],
];

function PaletteGroup({ title, items }: { title: string; items: [string, React.ReactNode][] }) {
  return (
    <div className="flex min-h-0 flex-1 flex-col border-t border-[#98979d] pt-px">
      <div className="flex h-[20px] shrink-0 items-center bg-[#e4e3e8] pr-[3px] pl-[3px]">
        <OpenFolder />
        <span className="ml-[2px] pb-px">{title}</span>
        <button aria-label={`Pin ${title}`} className="ml-auto"><PinIcon /></button>
      </div>
      <div className="relative min-h-0 flex-1 overflow-hidden">
        {items.map(([name, icon]) => (
          <button key={name} className="flex h-[23px] w-full items-center gap-[3px] pl-[16px]">
            <span className="pt-[4px]">{icon}</span>
            <span className="pb-[2px] leading-[18px]">{name}</span>
          </button>
        ))}
        <button aria-label={`More ${title}`} className="absolute bottom-0 left-[24px] flex h-[7px] w-[76px] items-center justify-center bg-[#b0b0b0]">
          <svg width="8" height="4" aria-hidden="true"><path d="M0 0h8L4 4z" fill="#55554c" /></svg>
        </button>
      </div>
    </div>
  );
}

function Editor() {
  return (
    <section className="flex min-h-0 flex-1 flex-col overflow-hidden rounded-t-[4px] border border-[#98979d] bg-white">
      <div className={strip + "bg-[#e0dfe4]"}>
        <div className={activeTab + "gap-[4px] bg-white"}>
          <SceneFile />
          <span className="mr-[2px]">*foo.scene</span>
          <button aria-label="Close"><CloseX /></button>
        </div>
        <PaneControls />
      </div>
      <div className="flex min-h-0 flex-1 pt-[3px] pr-[3px] pl-[3px]">
        <aside className="flex w-[125px] shrink-0 flex-col">
          <div className="flex h-[23px] shrink-0 items-center border-b border-[#98979d] bg-linear-to-b from-white to-[#e4e3e8] pl-[8px]">
            <button aria-label="Collapse palette">
              <svg width="8" height="11" aria-hidden="true"><path d="M6.500.500v10L1 5.500z" fill="#fff" stroke="#66665c" /></svg>
            </button>
            <span className="mr-[2px] ml-[12px]"><PaletteIcon /></span>
            Palette
          </div>
          <div className="h-[51px] shrink-0 pt-[3px] pr-[28px] pl-[14px]">
            <button className="flex h-[20px] w-full items-center gap-[3px] rounded-[2px] bg-[#cde1fa] pl-[2px]">
              <span className="pt-[3px]"><CursorIcon /></span>
              <span className="pb-[4px]">Select</span>
            </button>
            <button className="mt-[3px] flex h-[20px] w-full items-center gap-[3px] pl-[2px]">
              <span className="pt-[3px]"><CursorIcon help /></span>
              <span className="pb-[4px]">Inspector</span>
            </button>
          </div>
          <PaletteGroup title="Basic" items={basicItems} />
          <PaletteGroup title="Container" items={containerItems} />
        </aside>
        <div className="ml-px flex min-w-0 flex-1 flex-col border-l border-[#b4b4b8]">
          <div className="flex min-h-0 flex-1">
            <div className="flex min-w-0 flex-1 flex-col items-center overflow-hidden bg-[#979797]">
              <div className="flex h-[5px] w-[316px] shrink-0 flex-col justify-end overflow-hidden pb-px">
                <span className="w-[41px] border-l border-[#979797] bg-white pl-[3px] leading-[12px]">Scene</span>
              </div>
              <div className="flex min-h-0 flex-1">
                <div className="w-[9px] bg-linear-to-r from-[#979797] to-[#444]" />
                <div className="w-[320px] border border-b-0 border-dotted border-[#8a8a70] bg-[#ffff00]" />
                <div className="w-[9px] bg-linear-to-l from-[#979797] to-[#444]" />
              </div>
            </div>
            <VScroll before="h-[10px]" thumb="flex-1" after="h-[48px]" />
          </div>
          <div className="flex bg-[#e0dfe4]">
            <div className="flex-1"><HScroll dim /></div>
            <div className="w-[17px]" />
          </div>
        </div>
      </div>
      <div className="mx-[2px] mb-[2px] flex h-[18px] shrink-0 border-t border-[#98979d] bg-[#e0dfe4]">
        <button className="-mt-px rounded-b-[3px] border-r border-b border-[#98979d] bg-white px-[4px] leading-[14px]">Design</button>
        <button className="h-[16px] border-r border-[#98979d] px-[4px] leading-[14px]">IE</button>
        <button className="h-[16px] border-r border-[#98979d] px-[4px] leading-[14px]">Webkit</button>
      </div>
    </section>
  );
}

/* ---------- problems ---------- */

const otherTabs: [string, React.ReactNode][] = [
  ["Tasks", <TasksIcon />],
  ["Debug", <BugIcon />],
  ["Servers", <ServersIcon />],
  ["Snippets", <SnippetsIcon />],
  ["Console", <ConsoleIcon />],
];
const columns = ["Description", "Resource", "Path", "Location", "Type"];

function Problems() {
  return (
    <section className={paneCls + " h-[131px] shrink-0"}>
      <div className={strip}>
        <div className={activeTab + "gap-[4px] bg-linear-to-b from-white to-[#e0dfe4]"}>
          <ProblemsIcon />
          <span className="mr-[3px]">Problems</span>
          <button aria-label="Close"><CloseX /></button>
        </div>
        {otherTabs.map(([name, icon]) => (
          <button key={name} className="flex items-center gap-[3px] border-r border-[#98979d] pr-[3px] pl-[4px]">
            {icon}
            {name}
          </button>
        ))}
        <PaneControls menu />
      </div>
      <div className="h-[16px] shrink-0 pl-[2px] leading-[16px]">0 items</div>
      <div className="mx-[2px] mb-[2px] flex min-h-0 flex-1 flex-col border-t border-[#98979d]">
        <div className="min-h-0 flex-1 overflow-hidden bg-white">
          <table className="w-full table-fixed border-collapse">
            <colgroup>
              <col className="w-[299px]" />
              <col className="w-[90px]" />
              <col className="w-[120px]" />
              <col className="w-[90px]" />
              <col />
            </colgroup>
            <thead>
              <tr className="h-[19px] border-b-2 border-[#c4c4d6] bg-[#fafaff]">
                {columns.map((c, i) => (
                  <th key={c} className="p-0 text-left font-normal">
                    <div className={"flex h-[13px] items-center gap-[8px] border-r leading-[13px] font-light " + (i === 4 ? "border-transparent " : "border-[#b4b4c4] ") + (i === 0 ? "pl-[12px]" : "pl-[10px]")}>
                      {c}
                      {i === 0 && <svg width="9" height="5" aria-hidden="true"><path d="M0 5h9L4.500 0z" fill="#aaa896" /></svg>}
                    </div>
                  </th>
                ))}
              </tr>
            </thead>
            <tbody>
              {[0, 1, 2, 3].map((r) => (
                <tr key={r} className="h-[15px] border-b border-[#efeedd]">
                  {columns.map((c, i) => (
                    <td key={c} className={"border-r border-[#efeedd] p-0 " + (i === 0 ? "bg-[#f7f7f7]" : "")} />
                  ))}
                </tr>
              ))}
            </tbody>
          </table>
        </div>
        <HScroll thumb="mr-[3px] flex-1" />
      </div>
    </section>
  );
}

/* ---------- styler ---------- */

const palette = [
  "fff ccc 999 666 333 000 fc0 f90 f60 f30 000 333 666 999 ccc fff",
  "9c0 000 000 000 000 c90 fc3 fc6 f96 f63 c30 000 000 000 000 c03",
  "cf0 cf3 330 660 990 cc0 ff0 c93 c63 300 600 900 c00 f00 f36 f03",
  "9f0 cf6 9c3 663 993 cc3 ff3 960 930 633 933 c33 f33 c36 f69 f06",
  "6f0 9f6 6c3 690 996 cc6 ff6 963 630 966 c66 f66 903 c39 f6c f09",
  "3f0 6f3 390 6c0 9f3 cc9 ff9 c96 c60 c99 f99 f39 c06 906 f3c f0c",
  "0c0 3c0 360 693 9c6 cf9 ffc fc9 f93 fcc f9c c69 936 603 c09 303",
  "3c3 6c6 0f0 3f3 6f6 9f9 cfc 000 000 000 c9c 969 939 909 636 606",
  "060 363 090 393 696 9c9 000 000 000 fcf f9f f6f f3f f0f c6c c3c",
  "030 0c3 063 396 6c9 9fc cff 39f 9cf ccf c9f 96c 639 306 90c c0c",
  "0f3 3f6 093 0c6 3f9 9ff 9cc 06c 69c 99f 99c 93f 60c 609 c3f c0f",
  "0f6 6f9 3c6 096 6ff 6cc 699 036 369 66f 66c 669 309 93c c6f 90f",
  "0f9 6fc 3c9 3ff 3cc 399 366 069 039 33f 33c 339 336 63c 96f 60f",
].map((r) => r.split(" "));

function SectionHead({ title }: { title: string }) {
  return (
    <h3 className="flex h-[20px] shrink-0 items-center gap-[6px] bg-linear-to-b from-[#d4d3d8] to-[#e0dfe4] pb-px pl-[7px] text-[14px] leading-[18px] font-bold text-[#5a5a62]">
      <svg width="8" height="5" className="mt-[3px]" aria-hidden="true"><path d="M0 0h8L4 4.500z" fill="#4a4a52" /></svg>
      {title}
    </h3>
  );
}

function Spin() {
  return (
    <span className="flex flex-col gap-px py-px pr-px">
      {["up", "down"].map((d) => (
        <button key={d} aria-label={`Step ${d}`} className="flex h-[8px] w-[14px] items-center justify-center rounded-[2px] border border-[#aab] bg-[#f0f0f6]">
          <svg width="7" height="4" aria-hidden="true"><path d={d === "up" ? "M0 4h7L3.500 0z" : "M0 0h7L3.500 4z"} fill="#444" /></svg>
        </button>
      ))}
    </span>
  );
}

function NumberBox({ id, value, className }: { id: string; value: string; className: string }) {
  return (
    <div className={"flex h-[21px] shrink-0 border border-[#a4adb4] bg-white " + className}>
      <input id={id} aria-label={id} defaultValue={value} className="h-[16px] min-w-0 flex-1 bg-transparent pl-[3px] leading-[16px] outline-none" />
      <Spin />
    </div>
  );
}

const colorRows = [
  { id: "bgc", label: "Background Color", swatch: "bg-[#ffff00]", on: true },
  { id: "fgc", label: "Foreground Color", swatch: "bg-black", on: false },
  { id: "bdc", label: "Border Color", swatch: "bg-black", on: false },
];

const idleTab = "flex h-[19px] items-center rounded-t-[3px] border border-b-0 border-[#91a7b4] bg-linear-to-b from-white to-[#dcdbe6] pl-[4px] ";

function Styler() {
  return (
    <section className="flex w-[364px] shrink-0 flex-col overflow-hidden rounded-t-[4px] border border-[#98979d] bg-[#bfbfbf]">
      <div className={strip + "bg-[#e0dfe4]"}>
        <div className={activeTab + "gap-[3px] bg-linear-to-b from-[#e0dfe4] to-[#bfbfbf]"}>
          <QuickIcon />
          <span className="mr-[4px]">QuickStyler</span>
          <button aria-label="Close"><CloseX /></button>
        </div>
        <button className="flex items-center gap-[3px] border-r border-[#98979d] pr-[4px] pl-[5px]">
          <AttrIcon />
          Attributes
        </button>
        <PaneControls />
      </div>
      <div className="m-[2px] flex min-h-0 flex-1 flex-col bg-white">
        <h2 className="flex h-[31px] shrink-0 items-center gap-[6px] border-b border-[#c8c8cc] bg-linear-to-b from-white to-[#f2f2f4] pl-[10px] font-['DejaVu_Sans_Condensed','DejaVu_Sans',sans-serif] text-[13px] font-bold">
          <ElementIcon />
          Scene
        </h2>
        <div className="flex min-h-0 flex-1">
          <div className="relative flex min-w-0 flex-1 flex-col">
            <div className="flex min-h-0 flex-1 flex-col gap-[5px] overflow-hidden pt-[5px] pl-[5px] whitespace-nowrap">
              <div className="h-[79px] shrink-0 rounded-tl-[3px] bg-[#e0dfe4]">
                <SectionHead title="Text" />
                <div className="mt-[6px] flex items-center gap-[5px] pl-[14px]">
                  <span className="w-[67px] shrink-0">Font</span>
                  <Combo label="Font" value="맑은 고딕" options={["맑은 고딕", "굴림"]} className="w-[185px]" />
                  <NumberBox id="Font size" value="16" className="w-[75px]" />
                </div>
                <div className="mt-[5px] flex items-center pl-[86px] text-[#55555b]">
                  <button aria-label="Align left" className="flex size-[22px] items-center justify-center rounded-[3px] border border-[#7f9db9] bg-white">
                    <AlignIcon mode="left" />
                  </button>
                  <button aria-label="Align center" className="ml-[6px]"><AlignIcon mode="center" /></button>
                  <button aria-label="Align right" className="mr-[9px] ml-[11px]"><AlignIcon mode="right" /></button>
                  <Sep />
                  <button className="ml-[4px] w-[23px] font-['Liberation_Serif',serif] text-[15px] leading-[18px] font-bold">B</button>
                  <button className="w-[23px] font-['Liberation_Serif',serif] text-[15px] leading-[18px] font-bold italic">I</button>
                  <button className="mr-[4px] w-[23px] font-['Liberation_Serif',serif] text-[15px] leading-[18px] font-normal underline">U</button>
                  <Sep />
                  <button aria-label="Line height" className="ml-[8px]"><LineHeightIcon /></button>
                </div>
              </div>

              <div className="h-[377px] shrink-0 rounded-tl-[3px] bg-[#e0dfe4]">
                <SectionHead title="Color Edit" />
                <div className="flex flex-col gap-[5px] pt-[7px] pl-[11px]">
                  {colorRows.map((r) => (
                    <div key={r.id} className="flex h-[24px] items-center">
                      <input
                        type="radio"
                        name="target"
                        id={r.id}
                        defaultChecked={r.on}
                        className="size-[13px] appearance-none rounded-full border border-[#3f6288] bg-[#f6f6f2] checked:bg-[radial-gradient(circle,#2aa02a_0_2px,#f6f6f2_3px)]"
                      />
                      <label htmlFor={r.id} className="w-[114px] pl-[3px]">{r.label}</label>
                      <button aria-label={`${r.label} swatch`} className={"size-[24px] border border-[#9aa4ac] shadow-[inset_0_0_0_1px_#fff] " + r.swatch} />
                      <button className="ml-[6px] h-[20px] w-[43px] rounded-[3px] border border-[#1c4070] bg-linear-to-b from-white to-[#d0cfe0] leading-[18px]">Reset</button>
                    </div>
                  ))}
                </div>
                <div className="mt-[8px] flex h-[22px] items-end pt-px pl-[6px]">
                  <button className="relative -mb-px flex h-[22px] w-[101px] items-center gap-[9px] rounded-t-[3px] border-t-2 border-r border-l border-t-[#f5a030] border-r-[#91a7b4] border-l-[#91a7b4] bg-[#fbfbfe] pb-[2px] pl-[8px]">
                    <SwatchIcon pointer />
                    Swatches
                  </button>
                  <button className={idleTab + "w-[68px] gap-[10px]"}><SwatchIcon />Solid</button>
                  <button className={idleTab + "ml-px w-[88px] gap-[10px]"}><WheelIcon />Gradient</button>
                  <button className={idleTab + "ml-px w-[76px] gap-[10px]"}><PicturesIcon />Image</button>
                </div>
                <div className="ml-[6px] h-[236px] border-t border-b-2 border-l border-[#91a7b4] bg-linear-to-b from-[#fbfbfe] to-[#f6f6fa] pt-[7px] pl-[8px]">
                  <div className="flex items-center">
                    <Combo label="Swatch set" value="216 Safety Colors" options={["216 Safety Colors"]} className="w-[264px]" />
                    <button aria-label="Open swatches" className="ml-[6px] flex h-[24px] w-[26px] shrink-0 items-center justify-center rounded-[3px] border border-[#1c4070] bg-linear-to-b from-white to-[#d0cfe0]">
                      <OpenFolder />
                    </button>
                    <button aria-label="Transparent" className="ml-[7px] flex h-[24px] w-[26px] shrink-0 items-center justify-center rounded-[3px] border border-[#1c4070] bg-linear-to-b from-white to-[#d0cfe0]">
                      <Svg>
                        <rect width="16" height="16" fill="#e4eef8" />
                        <path d="M0 0h4v4H0zM8 0h4v4H8zM4 4h4v4H4zM12 4h4v4h-4zM0 8h4v4H0zM8 8h4v4H8zM4 12h4v4H4zM12 12h4v4h-4z" fill="#b4cce4" />
                      </Svg>
                    </button>
                  </div>
                  <div className="mt-[7px] flex h-[190px] w-[330px] border border-[#9aa4ac] bg-[#e0dfe4] pl-[6px]">
                    <div className="mt-[6px] mb-px grid grid-cols-[repeat(16,15px)] grid-rows-[repeat(13,12px)] gap-[2px] self-start overflow-hidden bg-white pt-[2px] pr-px pl-[2px]">
                      {palette.flatMap((row, y) =>
                        row.map((c, x) => (
                          <button
                            key={`${x}-${y}`}
                            aria-label={`#${c}`}
                            className={"relative " + (c === "000" ? "" : "border border-[#a4a4a8]")}
                            style={{ background: `#${c}` }}
                          >
                            {x === 6 && y === 2 && (
                              <>
                                <svg width="17" height="22" className="absolute top-px left-px z-10" aria-hidden="true">
                                  <path d="M5 1.500c1-1 2 0 2 1v5l1-.5 1.500 1 1.500-.5 1.500 1 2 1v5l-1.500 3v3H6v-3l-4-5-1-3 2 .5 2 2z" fill="#fff" stroke="#000" />
                                  <path d="M7 7v4M9.500 8v3M12 9v2.500M1 4l3 1M9 3l2-1" stroke="#000" />
                                </svg>
                                <span className="absolute top-[14px] left-[18px] z-10 h-[19px] border border-black bg-[#ffffe1] px-[2px] leading-[17px] shadow-[2px_2px_2px_#0006]">#FFFF00</span>
                              </>
                            )}
                          </button>
                        ))
                      )}
                    </div>
                    <div className="ml-auto flex"><VScroll thumb="flex-1" after="h-[33px]" /></div>
                  </div>
                </div>
              </div>

              <div className="min-h-0 flex-1 overflow-hidden rounded-tl-[3px] bg-[#e0dfe4]">
                <SectionHead title="Border" />
                <div className="mt-[6px] flex items-center pl-[11px]">
                  <label htmlFor="Border" className="w-[75px] shrink-0">Border</label>
                  <NumberBox id="Border" value="0" className="w-[212px]" />
                  <button aria-label="Border style" className="ml-[9px]"><DashIcon /></button>
                  <span className="ml-[9px] size-[13px] shrink-0 border border-[#66666c]" />
                </div>
                <div className="mt-[5px] flex items-center pl-[11px]">
                  <label htmlFor="Radius" className="w-[75px] shrink-0">Radius</label>
                  <NumberBox id="Radius" value="0" className="w-[264px]" />
                </div>
              </div>
            </div>
            <HScroll thumb="w-[92%]" />
            <div className="pointer-events-none absolute top-[84px] -right-[5px] left-[2px] z-20 h-[379px] border-2 border-[#f00]" />
          </div>
          <div className="flex bg-[#e0dfe4] pb-[17px]">
            <VScroll thumb="flex-1" after="h-[10px]" />
          </div>
        </div>
      </div>
    </section>
  );
}

/* ---------- window ---------- */

const menus: [string, string, string][] = [
  ["", "F", "ile"], ["", "E", "dit"], ["", "N", "avigate"], ["Se", "a", "rch"],
  ["", "P", "roject"], ["", "R", "un"], ["", "W", "indow"], ["", "H", "elp"],
];

export default function App() {
  return (
    <div className="flex h-screen min-h-[640px] w-full min-w-[1100px] flex-col overflow-hidden rounded-t-[6px] border-2 border-[#6c6984] bg-[#e0dfe4] font-[Roboto,'Noto_Sans_CJK_KR',sans-serif] text-[13px] leading-[16px] font-light text-black [&_button]:flex-none [&_button]:cursor-default">
      <header className="flex h-[28px] shrink-0 items-center border-b border-[#77758c] bg-linear-to-b from-[#d8d8e4] via-[#b4b4c8] to-[#ffffff] pr-[3px] pl-[4px]">
        <AppIcon />
        <h1 className="ml-[4px] font-['Open_Sans',sans-serif] text-[15px] font-bold text-[#111]">Design - navi/foo.scene - Mobello Studio</h1>
        <div className="ml-auto flex gap-[2px]">
          <button aria-label="Minimize window" className="size-[21px] rounded-[3px] border border-[#77778f] bg-linear-to-br from-white to-[#a4a4c0]">
            <svg width="19" height="19" aria-hidden="true"><path d="M4 13h7v3H4z" fill="#2d2d4a" /><path d="M5 14h5v1H5z" fill="#fff" /></svg>
          </button>
          <button aria-label="Maximize window" className="size-[21px] rounded-[3px] border border-[#77778f] bg-linear-to-br from-white to-[#a4a4c0]">
            <svg width="19" height="19" aria-hidden="true"><path d="M4.500 5.500h10v9h-10z" stroke="#2d2d4a" fill="#f2f2fa" /><path d="M4 5h11v2H4z" fill="#2d2d4a" /></svg>
          </button>
          <button aria-label="Close window" className="size-[21px] rounded-[3px] border border-[#a03030] bg-linear-to-br from-[#f4a0a0] to-[#cc3c3c]">
            <svg width="19" height="19" aria-hidden="true"><path d="M4.500 4.500l10 10M14.500 4.500l-10 10" stroke="#fff" strokeWidth="2.500" /></svg>
          </button>
        </div>
      </header>

      <nav className="flex h-[20px] shrink-0 items-center gap-[14px] border-b border-white bg-[#e0e3ec] pl-[8px]">
        {menus.map(([a, b, c]) => (
          <button key={a + b + c} className="leading-[18px]">{a}<u>{b}</u>{c}</button>
        ))}
      </nav>

      <div className="flex h-[33px] shrink-0 items-center pl-[8px]">
        <div className="flex items-center">
          <Handle />
          <Tool name="New"><NewIcon /></Tool><Drop />
          <Tool name="Save" wide><SaveIcon /></Tool>
          <Tool name="Save all" wide><SaveAllIcon /></Tool>
          <Tool name="Print" wide><PrintIcon /></Tool>
        </div>
        <div className="ml-[4px] flex items-center">
          <Handle />
          <Tool name="Debug"><BugIcon /></Tool><Drop />
          <Tool name="Run"><RunIcon /></Tool><Drop />
        </div>
        <div className="ml-[4px] flex items-center">
          <Handle />
          <Tool name="Open task" wide><TaskFolder /></Tool>
          <Tool name="Search"><TorchIcon /></Tool><Drop />
        </div>
        <div className="ml-[4px] flex items-center">
          <Handle />
          <Tool name="Next annotation"><StepIcon /></Tool><Drop dim />
          <Tool name="Previous annotation"><StepIcon up /></Tool><Drop dim />
          <Tool name="Last edit location" wide><ArrowLeft star /></Tool>
          <Tool name="Back"><ArrowLeft /></Tool><Drop />
          <Tool name="Forward"><ArrowRight /></Tool><Drop dim />
        </div>
        <div className="ml-[4px] flex items-center">
          <Handle />
          <Tool name="Layout" wide><LayoutIcon /></Tool>
          <Tool name="Browser"><GlobeIcon /></Tool><Drop />
        </div>
        <Sep />
        <div className="ml-[4px] flex h-[20px] w-[60px] shrink-0 justify-between border border-[#c9c7ba] bg-[#f5f4ea] p-[2px]">
          <span className="mr-[2px] flex-1 bg-[#e0dfe4]" />
          <span className="flex w-[15px] items-center justify-center rounded-[2px] border border-[#d4d2c4] bg-[#ecebe0]"><Chevron dir="down" dim /></span>
        </div>
        <div className="ml-[4px] flex items-center">
          <Tool name="Zoom in" wide><ZoomIcon plus /></Tool>
          <Tool name="Zoom out"><ZoomIcon /></Tool>
        </div>
        <Sep />
        <Combo label="Screen size" value="Default size (320px, 480px)" options={["Default size (320px, 480px)"]} className="mr-[4px] ml-[4px] w-[227px]" />
        <Sep />
        <div className="ml-[7px] flex items-center">
          <Tool name="Undo" wide><UndoIcon /></Tool>
          <Tool name="Redo"><UndoIcon redo /></Tool>
        </div>
        <Sep />
        <div className="ml-[7px] flex items-center">
          <Tool name="Grid" wide><GridDotsIcon /></Tool>
          <Tool name="Refresh"><SyncIcon /></Tool>
        </div>
        <div className="ml-auto flex h-[30px] w-[165px] shrink-0 items-center rounded-tl-[4px] border-t border-l border-white pl-[8px]">
          <button aria-label="Open perspective"><PerspectiveIcon /></button>
          <button className="ml-[4px] flex h-[22px] w-[70px] items-center gap-[3px] rounded-[3px] border border-[#8aa0b8] bg-white pl-[3px]">
            <AppIcon />
            Design
          </button>
        </div>
      </div>

      <main className="flex min-h-0 flex-1 gap-[3px] px-[6px]">
        <div className="flex w-[201px] shrink-0 flex-col gap-[3px]">
          <Explorer />
          <Outline />
        </div>
        <div className="flex min-w-0 flex-1 flex-col gap-[3px]">
          <Editor />
          <Problems />
        </div>
        <Styler />
      </main>

      <footer className="flex h-[32px] shrink-0 items-start pt-[6px] pl-[8px]">
        <Handle />
        <button aria-label="Show view"><StatusIcon /></button>
        <div className="ml-auto w-[291px]"><Handle /></div>
      </footer>
    </div>
  );
}
